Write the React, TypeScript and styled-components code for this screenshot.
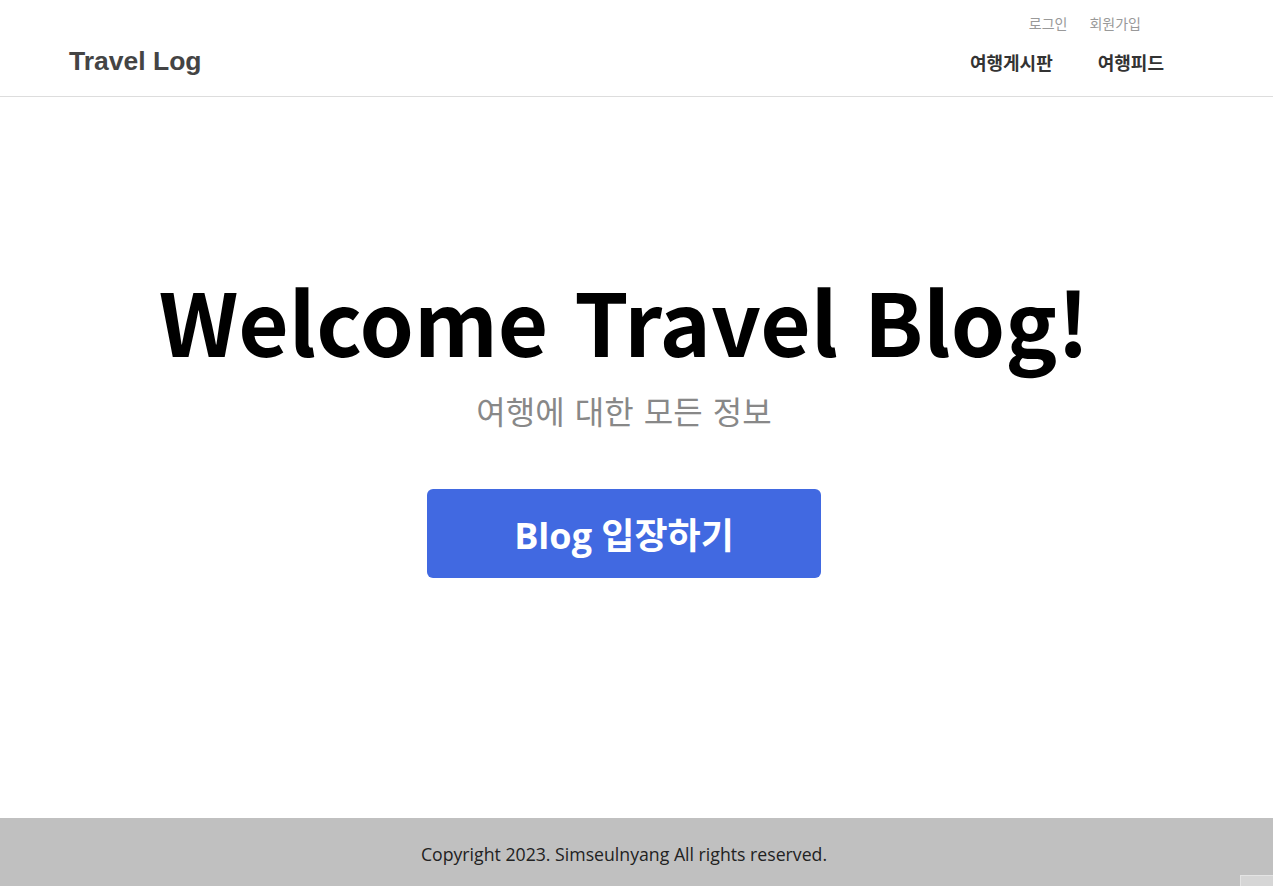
import React from 'react';
import styled, { createGlobalStyle } from 'styled-components';

const GlobalStyle = createGlobalStyle`
  html, body {
    margin: 0;
    padding: 0;
    background: #fff;
  }
  body {
    font-family: "Open Sans", "Noto Sans CJK KR", sans-serif;
  }
  * {
    box-sizing: border-box;
  }
`;

const Page = styled.div`
  display: flex;
  flex-direction: column;
  min-height: 100vh;
`;

const Header = styled.header`
  display: flex;
  justify-content: space-between;
  align-items: flex-end;
  height: 97px;
  padding: 0 109px 21px 69px;
  border-bottom: 1px solid #ddd;
`;

const Logo = styled.h1`
  margin: 0 0 -2px;
  font-family: "Liberation Sans", Arial, sans-serif;
  font-size: 26.5px;
  font-weight: 700;
  color: #444;
`;

const HeaderRight = styled.div`
  display: flex;
  flex-direction: column;
  align-items: flex-end;
  gap: 16px;
`;

const UserMenu = styled.div`
  display: flex;
  gap: 22px;
  margin-right: 23px;
`;

const UserLink = styled.a`
  font-family: "Noto Sans CJK KR", sans-serif;
  font-size: 14px;
  color: #999;
  text-decoration: none;
  cursor: pointer;
`;

const Nav = styled.nav`
  display: flex;
  gap: 45px;
`;

const NavLink = styled.a`
  font-family: "Noto Sans CJK KR", sans-serif;
  font-size: 18px;
  font-weight: 700;
  color: #333;
  text-decoration: none;
  cursor: pointer;
`;

const Hero = styled.main`
  flex: 1;
  display: flex;
  flex-direction: column;
  align-items: center;
  padding: 170px 25px 0 0;
`;

const Title = styled.h2`
  margin: 0;
  font-family: "Noto Sans CJK KR", sans-serif;
  font-size: 87px;
  font-weight: 700;
  line-height: 1.2;
  word-spacing: 6px;
  color: #000;
`;

const Subtitle = styled.p`
  margin: 16px 0 0;
  font-family: "Noto Sans CJK KR", sans-serif;
  font-size: 32px;
  font-weight: 400;
  word-spacing: 3px;
  color: #888;
`;

const EnterButton = styled.button`
  margin-top: 56px;
  width: 394px;
  height: 89px;
  border: none;
  border-radius: 6px;
  background-color: #4169e1;
  color: #fff;
  font-family: "Open Sans", "Noto Sans CJK KR", sans-serif;
  font-size: 36px;
  font-weight: 700;
  cursor: pointer;
`;

const Footer = styled.footer`
  display: flex;
  align-items: center;
  justify-content: center;
  height: 68px;
  padding: 4px 25px 0 0;
  background-color: #c0c0c0;
  font-family: "Open Sans", "Noto Sans CJK KR", sans-serif;
  font-size: 17.7px;
  color: #222;
`;

const CornerTab = styled.div`
  position: fixed;
  right: 0;
  bottom: 0;
  width: 33px;
  height: 11px;
  background: #d6d6d6;
  border-top: 1px solid #e4e4e4;
  border-left: 1px solid #e4e4e4;
`;

function App() {
  return (
    <Page>
      <GlobalStyle />
      <Header>
        <Logo>Travel Log</Logo>
        <HeaderRight>
          <UserMenu>
            <UserLink>로그인</UserLink>
            <UserLink>회원가입</UserLink>
          </UserMenu>
          <Nav>
            <NavLink>여행게시판</NavLink>
            <NavLink>여행피드</NavLink>
          </Nav>
        </HeaderRight>
      </Header>
      <Hero>
        <Title>Welcome Travel Blog!</Title>
        <Subtitle>여행에 대한 모든 정보</Subtitle>
        <EnterButton>Blog 입장하기</EnterButton>
      </Hero>
      <Footer>Copyright 2023. Simseulnyang All rights reserved.</Footer>
      <CornerTab />
    </Page>
  );
}

export default App;
